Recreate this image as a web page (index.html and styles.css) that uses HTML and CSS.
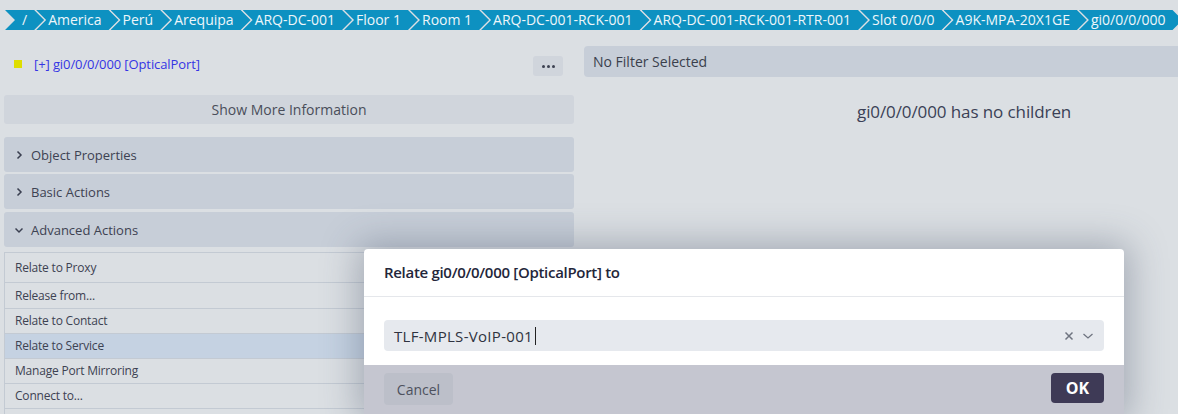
FILE: index.html
```html
<!DOCTYPE html>
<html lang="es">
<head>
<meta charset="utf-8">
<title>gi0/0/0/000</title>
<link rel="stylesheet" href="styles.css">
</head>
<body>
<nav class="crumbs">
  <span class="crumb first">/</span>
  <span class="crumb">America</span>
  <span class="crumb">Perú</span>
  <span class="crumb">Arequipa</span>
  <span class="crumb">ARQ-DC-001</span>
  <span class="crumb">Floor 1</span>
  <span class="crumb">Room 1</span>
  <span class="crumb">ARQ-DC-001-RCK-001</span>
  <span class="crumb">ARQ-DC-001-RCK-001-RTR-001</span>
  <span class="crumb">Slot 0/0/0</span>
  <span class="crumb">A9K-MPA-20X1GE</span>
  <span class="crumb">gi0/0/0/000</span>
</nav>

<main class="main">
  <section class="left">
    <div class="obj-row">
      <span class="swatch"></span>
      <a class="obj-link">[+] gi0/0/0/000 [OpticalPort]</a>
      <button class="dots"><i></i><i></i><i></i></button>
    </div>
    <button class="show-more">Show More Information</button>

    <div class="acc">
      <div class="acc-head">
        <svg class="chev" width="8" height="10" viewBox="0 0 8 10"><path d="M2.5 1.5 L6 5 L2.5 8.5" fill="none" stroke="#3a3f50" stroke-width="1.5"/></svg>
        Object Properties
      </div>
      <div class="acc-head">
        <svg class="chev" width="8" height="10" viewBox="0 0 8 10"><path d="M2.5 1.5 L6 5 L2.5 8.5" fill="none" stroke="#3a3f50" stroke-width="1.5"/></svg>
        Basic Actions
      </div>
      <div class="acc-head open">
        <svg class="chev" width="8" height="10" viewBox="0 0 8 10"><path d="M0.5 3.5 L4 7 L7.5 3.5" fill="none" stroke="#3a3f50" stroke-width="1.5"/></svg>
        Advanced Actions
      </div>
    </div>

    <ul class="actions">
      <li class="tall">Relate to Proxy</li>
      <li class="mid">Release from...</li>
      <li>Relate to Contact</li>
      <li class="active">Relate to Service</li>
      <li>Manage Port Mirroring</li>
      <li>Connect to...</li>
      <li>&nbsp;</li>
    </ul>
  </section>

  <section class="right">
    <div class="filter">No Filter Selected</div>
    <p class="empty">gi0/0/0/000 has no children</p>
  </section>
</main>

<div class="modal">
  <div class="modal-head">Relate gi0/0/0/000 [OpticalPort] to</div>
  <div class="modal-body">
    <div class="select">
      <span class="value">TLF-MPLS-VoIP-001</span><span class="caret"></span>
      <span class="icons">
        <svg width="10" height="10" viewBox="0 0 10 10"><path d="M1.5 1.5 L8.5 8.5 M8.5 1.5 L1.5 8.5" stroke="#6f7480" stroke-width="1.5"/></svg>
        <svg width="12" height="8" viewBox="0 0 12 8"><path d="M1.5 2 L6 6 L10.5 2" fill="none" stroke="#6f7480" stroke-width="1.3"/></svg>
      </span>
    </div>
  </div>
  <div class="modal-foot">
    <button class="btn cancel">Cancel</button>
    <button class="btn ok">OK</button>
  </div>
</div>
</body>
</html>
```

FILE: styles.css
```css
html, body {
  margin: 0;
  padding: 0;
  overflow: hidden;
}
body {
  background: #dbdfe3;
  font-family: "Open Sans", "Noto Sans", sans-serif;
  color: #3d4252;
  width: 1178px;
  height: 414px;
  position: relative;
}

/* breadcrumb */
.crumbs {
  display: flex;
  padding: 10px 0 0 5px;
  height: 20px;
}
.crumb {
  background: #0d91c1;
  color: #eef6fa;
  font-size: 14px;
  line-height: 20px;
  height: 20px;
  padding: 0 17px 0 12px;
  margin-left: -8px;
  white-space: nowrap;
  letter-spacing: 0;
  clip-path: polygon(0 0, calc(100% - 10px) 0, 100% 50%, calc(100% - 10px) 100%, 0 100%, 10px 50%);
}
.crumb.first {
  margin-left: 0;
  padding-left: 17px;
}

/* main area */
.main {
  display: flex;
  gap: 10px;
  padding-left: 4px;
}
.left {
  width: 570px;
  flex: none;
}
.right {
  flex: 1;
  padding-top: 16px;
}

.obj-row {
  display: flex;
  align-items: center;
  height: 32px;
  margin-top: 18px;
  padding-left: 10px;
}
.swatch {
  width: 8px;
  height: 8px;
  background: #dede00;
  margin-right: 12px;
}
.obj-link {
  color: #3535e4;
  font-size: 13px;
  flex: 1;
  letter-spacing: -0.1px;
}
.dots {
  width: 30px;
  height: 20px;
  margin: 4px 11px 0 0;
  border: 0;
  border-radius: 3px;
  background: #d0d5dc;
  display: flex;
  align-items: center;
  justify-content: center;
  gap: 2px;
  padding: 0;
}
.dots i {
  width: 3px;
  height: 3px;
  border-radius: 50%;
  background: #3d4252;
}

.show-more {
  display: block;
  width: 100%;
  height: 29px;
  margin-top: 15px;
  border: 0;
  border-radius: 3px;
  background: #d0d5dc;
  color: #4a4e5a;
  font-family: inherit;
  font-size: 14px;
  letter-spacing: 0;
}

.acc {
  margin-top: 13px;
  display: flex;
  flex-direction: column;
  gap: 2px;
}
.acc-head {
  height: 35px;
  background: #c7ced8;
  border-radius: 3px;
  display: flex;
  align-items: center;
  font-size: 13px;
  color: #3d4252;
  padding-left: 11px;
  letter-spacing: 0;
}
.acc-head.open {
  margin-top: 1px;
}
.chev {
  margin-right: 8px;
}

.actions {
  list-style: none;
  margin: 5px 0 0;
  padding: 0;
  border-left: 1px solid #c3cad3;
}
.actions li {
  height: 24px;
  line-height: 24px;
  border-top: 1px solid #c3cad3;
  font-size: 12px;
  padding-left: 10px;
  color: #3d4252;
  letter-spacing: -0.2px;
}
.actions li.tall {
  height: 29px;
  line-height: 29px;
}
.actions li.mid {
  height: 25px;
  line-height: 25px;
}
.actions li.active {
  background: #c5d2e2;
}

.filter {
  height: 31px;
  line-height: 31px;
  background: #c7ced8;
  border-radius: 4px 0 0 4px;
  padding-left: 9px;
  font-size: 14px;
  color: #3a3f4c;
  letter-spacing: 0;
}
.empty {
  margin: 23px 0 0;
  padding-left: 273px;
  font-size: 17px;
  color: #3a3f56;
  letter-spacing: -0.1px;
}

/* modal (overlay) */
.modal {
  position: absolute;
  left: 364px;
  top: 249px;
  width: 760px;
  background: #fff;
  border-radius: 4px 4px 0 0;
  box-shadow: 0 0 36px 6px rgba(60, 72, 95, 0.35);
  overflow: hidden;
}
.modal-head {
  height: 47px;
  line-height: 47px;
  padding-left: 20px;
  font-size: 15px;
  font-weight: 600;
  color: #23263a;
  border-bottom: 1px solid #e5e7eb;
  letter-spacing: -0.3px;
}
.modal-body {
  padding: 23px 20px 14px;
}
.select {
  height: 31px;
  background: #e6e9ee;
  border-radius: 4px;
  display: flex;
  align-items: center;
  padding-left: 10px;
  font-size: 15px;
  color: #2f3340;
  letter-spacing: 0.3px;
}
.caret {
  width: 1px;
  height: 18px;
  background: #222;
  margin-left: 2px;
}
.icons {
  margin-left: auto;
  display: flex;
  align-items: center;
  gap: 8px;
  padding-right: 10px;
}
.modal-foot {
  background: #c5c6d0;
  display: flex;
  justify-content: space-between;
  padding: 8px 20px 10px;
}
.btn {
  border: 0;
  border-radius: 4px;
  font-family: inherit;
  height: 32px;
  padding: 0 12px;
}
.cancel {
  background: #bcbfc9;
  color: #4d515e;
  font-size: 14px;
  width: 69px;
}
.ok {
  background: #3e3a56;
  color: #fff;
  font-size: 16px;
  font-weight: 700;
  width: 53px;
  height: 30px;
}
```
